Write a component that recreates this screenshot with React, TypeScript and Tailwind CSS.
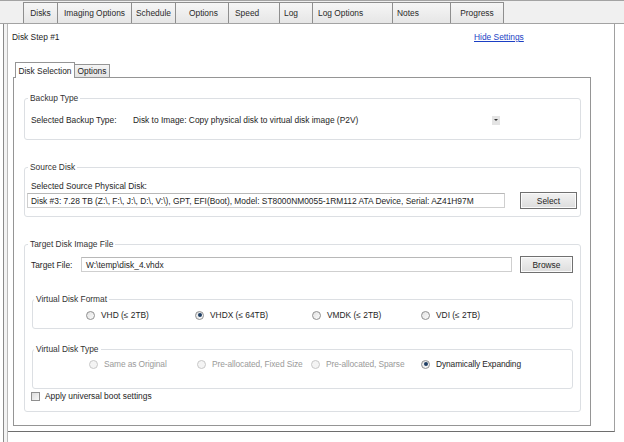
import React from 'react';

const topTabs = [
  { label: 'Disks', w: 35, pad: 'justify-center' },
  { label: 'Imaging Options', w: 75, pad: 'justify-center' },
  { label: 'Schedule', w: 45, pad: 'justify-center' },
  { label: 'Options', w: 54, pad: 'justify-start pl-[13px]' },
  { label: 'Speed', w: 52, pad: 'justify-start pl-[6px]' },
  { label: 'Log', w: 34, pad: 'justify-start pl-[4px]' },
  { label: 'Log Options', w: 81, pad: 'justify-start pl-[5px]' },
  { label: 'Notes', w: 59, pad: 'justify-start pl-[4px]' },
  { label: 'Progress', w: 54, pad: 'justify-center' },
];

function Radio({ checked, disabled, label }: { checked?: boolean; disabled?: boolean; label: string }) {
  return (
    <div className="flex items-center gap-[6px]">
      <span
        className={`flex h-[9px] w-[9px] items-center justify-center rounded-full border ${
          disabled
            ? 'border-[#c8c8c8] bg-[#f4f4f4]'
            : 'border-[#8f8f8f] bg-gradient-to-br from-[#e2e2e2] to-[#fbfbfb]'
        }`}
      >
        {checked && <span className="h-[4px] w-[4px] rounded-full bg-[#1f3e63]" />}
      </span>
      <span className={disabled ? 'text-[#9a9a9a]' : 'text-[#1e1e1e]'}>{label}</span>
    </div>
  );
}

function Button({ children, w }: { children: React.ReactNode; w: string }) {
  return (
    <div
      className={`${w} flex h-[17px] items-center justify-center border border-[#707070] bg-gradient-to-b from-[#f2f2f2] to-[#dddddd] shadow-[inset_0_0_0_1px_#fbfbfb] text-[#1e1e1e]`}
    >
      {children}
    </div>
  );
}

export default function App() {
  return (
    <div className="flex h-[442px] w-[624px] flex-col overflow-hidden bg-white font-['Liberation_Sans',Arial,sans-serif] text-[8.4px] leading-[10px] text-[#1e1e1e]">
      {/* Top tab strip */}
      <div className="flex h-[24px] items-end border-t border-b border-[#a3a3a3] bg-[#f0f0f0] pl-[23px]">
        {topTabs.map((t) => (
          <div
            key={t.label}
            style={{ width: t.w }}
            className={`-mr-px flex h-[21px] items-center border border-b-0 border-[#8e8e8e] bg-gradient-to-b from-[#f6f6f6] to-[#e6e6e6] text-[#2a2a2a] ${t.pad}`}
          >
            {t.label}
          </div>
        ))}
      </div>

      <div className="flex flex-1">
        <div className="w-[3px]" />
        <div className="w-[5px] border-l border-r border-l-[#8a8a8a] border-r-[#b9b9b9] bg-[#f3f3f3]" />

        {/* Outer page */}
        <div className="flex h-[408px] w-[607px] flex-col border-r border-b border-r-[#a0a0a0] border-b-[#6e6e6e]">
          <div className="flex pt-[8px] pl-[4px]">
            <span className="w-[462px]">Disk Step #1</span>
            <span className="text-[#1b3fc4] underline">Hide Settings</span>
          </div>

          {/* Inner tab control */}
          <div className="mt-[20px] ml-[5px] flex flex-col">
            <div className="flex items-end pl-[2px]">
              <div className="relative z-10 -mb-px flex h-[16px] w-[60px] items-center justify-center border border-b-0 border-[#959595] bg-white">
                Disk Selection
              </div>
              <div className="flex h-[13px] w-[35px] items-center justify-center border border-b-0 border-l-0 border-[#959595] bg-gradient-to-b from-[#f4f4f4] to-[#e4e4e4]">
                Options
              </div>
            </div>

            <div className="flex h-[349px] w-[578px] flex-col border border-[#959595] bg-white">
              {/* Backup Type */}
              <fieldset className="mt-[15px] ml-[10px] w-[557px] rounded-[3px] border border-[#dcdfe3] pb-[14px]">
                <legend className="ml-[3px] px-[2px] text-[#333]">Backup Type</legend>
                <div className="mt-[12px] flex items-center">
                  <span className="w-[108px] pl-[6px]">Selected Backup Type:</span>
                  <div className="flex w-[367px] items-center justify-between">
                    <span>Disk to Image: Copy physical disk to virtual disk image (P2V)</span>
                    <span className="flex h-[9px] w-[8px] items-center justify-center bg-[#e4e4e4]">
                      <span className="h-0 w-0 border-x-[2px] border-t-[2px] border-x-transparent border-t-[#333]" />
                    </span>
                  </div>
                </div>
              </fieldset>

              {/* Source Disk */}
              <fieldset className="mt-[22px] ml-[10px] w-[557px] rounded-[3px] border border-[#dcdfe3] pb-[7px]">
                <legend className="ml-[3px] px-[2px] text-[#333]">Source Disk</legend>
                <div className="mt-[9px] pl-[6px]">Selected Source Physical Disk:</div>
                <div className="mt-px flex items-center">
                  <div className="ml-[2px] flex h-[15px] w-[478px] items-center border border-[#cfcfcf] border-t-[#b8b8b8] pl-[3px] whitespace-nowrap">
                    Disk #3: 7.28 TB (Z:\, F:\, J:\, D:\, V:\), GPT, EFI(Boot), Model: ST8000NM0055-1RM112 ATA Device, Serial: AZ41H97M
                  </div>
                  <div className="ml-[15px]">
                    <Button w="w-[57px]">Select</Button>
                  </div>
                </div>
              </fieldset>

              {/* Target Disk Image File */}
              <fieldset className="mt-[22px] ml-[10px] w-[557px] rounded-[3px] border border-[#dcdfe3] pb-[10px]">
                <legend className="ml-[3px] px-[2px] text-[#333]">Target Disk Image File</legend>
                <div className="mt-[7px] flex items-center">
                  <span className="w-[56px] pl-[6px]">Target File:</span>
                  <div className="flex h-[15px] w-[431px] items-center border border-[#cfcfcf] border-t-[#b8b8b8] pl-[4px]">
                    W:\temp\disk_4.vhdx
                  </div>
                  <div className="ml-[8px]">
                    <Button w="w-[53px]">Browse</Button>
                  </div>
                </div>

                <fieldset className="mt-[21px] ml-[7px] w-[541px] rounded-[3px] border border-[#dcdfe3] pb-[8px]">
                  <legend className="ml-[1px] px-[2px] text-[#333]">Virtual Disk Format</legend>
                  <div className="mt-[6px] grid grid-cols-[109px_117px_109px_auto] pl-[53px]">
                    <Radio label="VHD (≤ 2TB)" />
                    <Radio label="VHDX (≤ 64TB)" checked />
                    <Radio label="VMDK (≤ 2TB)" />
                    <Radio label="VDI (≤ 2TB)" />
                  </div>
                </fieldset>

                <fieldset className="mt-[15px] ml-[7px] w-[541px] rounded-[3px] border border-[#dcdfe3] pb-[19px]">
                  <legend className="ml-[1px] px-[2px] text-[#333]">Virtual Disk Type</legend>
                  <div className="mt-[5px] grid grid-cols-[108px_114px_110px_auto] pl-[56px] tracking-[-0.1px]">
                    <Radio label="Same as Original" disabled />
                    <Radio label="Pre-allocated, Fixed Size" disabled />
                    <Radio label="Pre-allocated, Sparse" disabled />
                    <Radio label="Dynamically Expanding" checked />
                  </div>
                </fieldset>

                <div className="mt-[2px] ml-[6px] flex items-center gap-[5px]">
                  <span className="h-[9px] w-[9px] border border-[#8f8f8f] bg-gradient-to-br from-[#dcdcdc] to-[#f8f8f8]" />
                  <span>Apply universal boot settings</span>
                </div>
              </fieldset>
            </div>
          </div>
        </div>
      </div>
    </div>
  );
}
